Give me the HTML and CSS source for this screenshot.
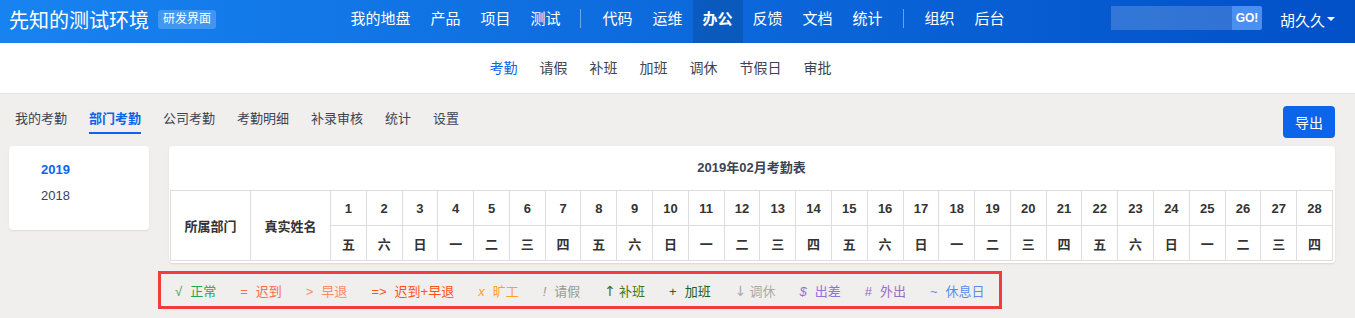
FILE: index.html
```html
<!DOCTYPE html>
<html>
<head>
    <meta charset="utf-8">
    <title>考勤 - 先知的测试环境</title>
    <link rel="stylesheet" href="styles.css">
</head>
<body>
    <div class="header">
        <div class="brand">
            <span class="brand-name">先知的测试环境</span>
            <span class="brand-badge">研发界面</span>
        </div>
        <div class="main-nav">
            <a class="nav-item">我的地盘</a>
            <a class="nav-item">产品</a>
            <a class="nav-item">项目</a>
            <a class="nav-item">测试</a>
            <span class="nav-divider"></span>
            <a class="nav-item">代码</a>
            <a class="nav-item">运维</a>
            <a class="nav-item active">办公</a>
            <a class="nav-item">反馈</a>
            <a class="nav-item">文档</a>
            <a class="nav-item">统计</a>
            <span class="nav-divider"></span>
            <a class="nav-item">组织</a>
            <a class="nav-item">后台</a>
        </div>
        <div class="header-right">
            <div class="search-box">
                <input type="text" class="search-input">
                <button class="search-go">GO!</button>
            </div>
            <a class="user-menu">胡久久<span class="caret"></span></a>
        </div>
    </div>

    <div class="sub-nav">
        <a class="sub-item active">考勤</a>
        <a class="sub-item">请假</a>
        <a class="sub-item">补班</a>
        <a class="sub-item">加班</a>
        <a class="sub-item">调休</a>
        <a class="sub-item">节假日</a>
        <a class="sub-item">审批</a>
    </div>

    <div class="toolbar">
        <div class="tabs">
            <a class="tab">我的考勤</a>
            <a class="tab active">部门考勤</a>
            <a class="tab">公司考勤</a>
            <a class="tab">考勤明细</a>
            <a class="tab">补录审核</a>
            <a class="tab">统计</a>
            <a class="tab">设置</a>
        </div>
        <button class="btn-export">导出</button>
    </div>

    <div class="content">
        <div class="year-panel">
            <a class="year active">2019</a>
            <a class="year">2018</a>
        </div>
        <div class="main-col">
            <div class="sheet">
                <div class="sheet-title">2019年02月考勤表</div>
                <table class="sheet-table">
                    <colgroup>
                        <col class="col-wide">
                        <col class="col-wide">
                    </colgroup>
                    <thead>
                        <tr id="dayRow">
                            <th rowspan="2">所属部门</th>
                            <th rowspan="2">真实姓名</th>
                        </tr>
                        <tr id="weekRow"></tr>
                    </thead>
                </table>
            </div>
            <div class="legend">
                <span class="legend-item normal"><i>√</i>正常</span>
                <span class="legend-item late"><i>=</i>迟到</span>
                <span class="legend-item early"><i>&gt;</i>早退</span>
                <span class="legend-item both"><i>=&gt;</i>迟到+早退</span>
                <span class="legend-item absent"><i class="slant">x</i>旷工</span>
                <span class="legend-item leave"><i class="slant">!</i>请假</span>
                <span class="legend-item makeup"><i class="arrow">↑</i>补班</span>
                <span class="legend-item overtime"><i>+</i>加班</span>
                <span class="legend-item lieu"><i class="arrow">↓</i>调休</span>
                <span class="legend-item trip"><i class="slant">$</i>出差</span>
                <span class="legend-item egress"><i>#</i>外出</span>
                <span class="legend-item rest"><i>~</i>休息日</span>
            </div>
        </div>
    </div>

    <script>
        const weekNames = ['日', '一', '二', '三', '四', '五', '六'];
        const dayRow = document.getElementById('dayRow');
        const weekRow = document.getElementById('weekRow');

        // Feb 2019, the 1st is a Friday
        for (let day = 1; day <= 28; day++) {
            const dayCell = document.createElement('th');
            dayCell.textContent = day;
            dayRow.appendChild(dayCell);

            const weekCell = document.createElement('th');
            weekCell.textContent = weekNames[(day + 4) % 7];
            weekRow.appendChild(weekCell);
        }
    </script>
</body>
</html>
```

FILE: styles.css
```css
body {
    margin: 0;
    background-color: #f0efee;
    color: #3c4353;
    font-family: "Liberation Sans", "Noto Sans CJK SC", sans-serif;
    font-size: 13px;
}

a {
    cursor: pointer;
}

.header {
    display: grid;
    grid-template-columns: 1fr auto 1fr;
    height: 43px;
    background: linear-gradient(to right, #1783f1, #0250c8);
    color: #fff;
}

.brand {
    display: flex;
    align-items: center;
    height: 38px;
    padding-left: 9px;
}

.brand-name {
    font-size: 20px;
}

.brand-badge {
    margin-left: 9px;
    padding: 0 5px;
    height: 19px;
    line-height: 19px;
    font-size: 12px;
    border-radius: 3px;
    background-color: rgba(255, 255, 255, 0.2);
}

.main-nav {
    display: flex;
}

.nav-item {
    padding: 0 10px;
    font-size: 15px;
    line-height: 38px;
    height: 43px;
}

.nav-item.active {
    background-color: rgba(0, 0, 0, 0.13);
    font-weight: bold;
}

.nav-divider {
    width: 1px;
    height: 19px;
    margin: 9px 11px 0 10px;
    background-color: rgba(255, 255, 255, 0.4);
}

.header-right {
    display: flex;
    justify-content: flex-end;
    align-items: flex-start;
    padding-right: 20px;
}

.search-box {
    display: flex;
    margin-top: 6px;
}

.search-input {
    width: 121px;
    height: 24px;
    box-sizing: border-box;
    border: none;
    padding: 0 6px;
    background-color: rgba(255, 255, 255, 0.18);
    outline: none;
}

.search-go {
    width: 30px;
    height: 24px;
    border: none;
    padding: 0;
    border-radius: 0 2px 2px 0;
    background-color: #4a90f2;
    color: #fff;
    font-family: "Liberation Sans", sans-serif;
    font-size: 12px;
    font-weight: bold;
}

.user-menu {
    display: flex;
    align-items: center;
    margin-left: 18px;
    height: 38px;
    font-size: 15px;
}

.caret {
    margin-left: 2px;
    border-top: 4px solid #fff;
    border-left: 4px solid transparent;
    border-right: 4px solid transparent;
}

.sub-nav {
    display: flex;
    justify-content: center;
    padding-right: 34px;
    height: 50px;
    background-color: #fff;
    border-bottom: 1px solid #e4e4e4;
}

.sub-item {
    padding: 0 11px;
    line-height: 51px;
    font-size: 14px;
}

.sub-item.active {
    color: #0c64eb;
}

.toolbar {
    display: flex;
    justify-content: space-between;
    align-items: flex-start;
    height: 52px;
    box-sizing: border-box;
    padding: 12px 20px 0 15px;
}

.tabs {
    display: flex;
    gap: 22px;
}

.tab {
    line-height: 26px;
    border-bottom: 2px solid transparent;
}

.tab.active {
    color: #0c64eb;
    font-weight: bold;
    border-bottom-color: #0c64eb;
}

.btn-export {
    width: 52px;
    height: 32px;
    border: none;
    border-radius: 4px;
    background-color: #0c64eb;
    color: #fff;
    font-family: "Liberation Sans", "Noto Sans CJK SC", sans-serif;
    font-size: 14px;
}

.content {
    display: flex;
    gap: 20px;
    padding: 0 20px 0 9px;
}

.year-panel {
    width: 140px;
    box-sizing: border-box;
    padding: 11px 0 21px 32px;
    background-color: #fff;
    border-radius: 4px;
    box-shadow: 0 1px 2px rgba(0, 0, 0, 0.08);
    align-self: flex-start;
}

.year {
    display: block;
    line-height: 26px;
}

.year.active {
    color: #0c64eb;
    font-weight: bold;
}

.main-col {
    flex: 1;
}

.sheet {
    background-color: #fff;
    border-radius: 4px;
    padding: 0 2px 2px 1px;
    box-shadow: 0 1px 2px rgba(0, 0, 0, 0.1);
}

.sheet-title {
    height: 44px;
    line-height: 44px;
    text-align: center;
    font-weight: bold;
}

.sheet-table {
    width: 100%;
    border-collapse: collapse;
    table-layout: fixed;
}

.col-wide {
    width: 80px;
}

.sheet-table th {
    height: 34px;
    padding: 0;
    border: 1px solid #ddd;
    font-size: 13px;
    color: #333;
    text-align: center;
}

.legend {
    display: inline-flex;
    gap: 24px;
    margin: 8px 0 0 -11px;
    height: 32px;
    align-items: center;
    padding: 0 14px;
    border: 3px solid #f23d3d;
}

.legend-item i {
    font-style: normal;
    margin-right: 8px;
}

.legend-item i.slant {
    font-style: italic;
}

.legend-item i.arrow {
    font-family: "DejaVu Sans", sans-serif;
    font-size: 14px;
    margin-right: 3px;
}

.normal { color: #22a84a; }
.late { color: #fb6a4e; }
.early { color: #ff8a65; }
.both { color: #ff5217; }
.absent { color: #ffa02a; }
.leave { color: #999; }
.makeup { color: #3b7a12; }
.overtime { color: #15641a; }
.lieu { color: #aaa; }
.trip { color: #9370db; }
.egress { color: #9a6bc4; }
.rest { color: #5a8cf0; }
```
